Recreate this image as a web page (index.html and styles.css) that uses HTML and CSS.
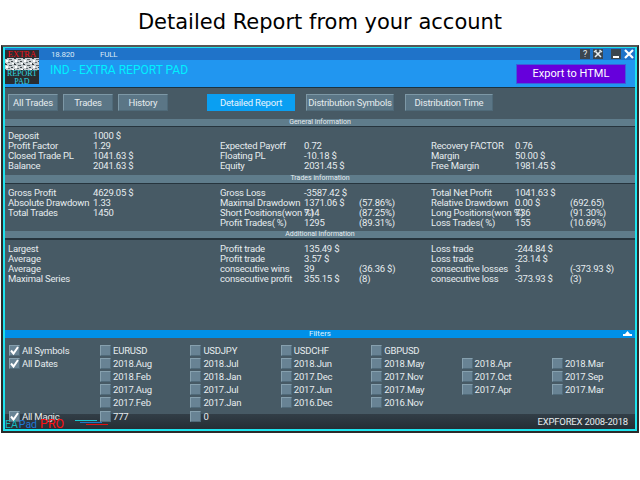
FILE: index.html
```html
<!DOCTYPE html>
<html>
<head>
  <meta charset="UTF-8">
  <title>Detailed Report</title>
  <link rel="stylesheet" href="styles.css">
</head>
<body>
  <h1>Detailed Report from your account</h1>
  <div class="window">
    <div class="frame">
      <div class="titlebar">
        <span class="version">18.820</span>
        <span class="mode">FULL</span>
        <div class="win-buttons">
          <span class="win-btn">?</span>
          <span class="win-btn tools">
            <svg width="10" height="10" viewBox="0 0 10 10"><path d="M2.5 2.5 8 8M7.5 2.5 2 8" stroke="#e8eef2" stroke-width="1.6"/><path d="M1 3 3.5 1M6.5 1 9 3" stroke="#e8eef2" stroke-width="1.4"/></svg>
          </span>
          <span class="win-btn min"><i></i></span>
          <span class="win-btn close">
            <svg width="10" height="10" viewBox="0 0 10 10"><path d="M1 1 9 9M9 1 1 9" stroke="#fff" stroke-width="2.2"/></svg>
          </span>
        </div>
      </div>
      <div class="header">
        <div class="logo">
          <span class="logo-red">EXTRA</span>
          <svg class="logo-noise" width="34" height="12" viewBox="0 0 34 12">
            <defs>
              <pattern id="noise" width="9" height="6" patternUnits="userSpaceOnUse">
                <rect width="9" height="6" fill="#c9cfd2"/>
                <rect x="0" y="0" width="2" height="1" fill="#33393d"/>
                <rect x="4" y="1" width="3" height="1" fill="#5c6468"/>
                <rect x="1" y="2" width="2" height="2" fill="#fff"/>
                <rect x="6" y="3" width="2" height="1" fill="#3c4347"/>
                <rect x="3" y="4" width="2" height="1" fill="#6a7276"/>
                <rect x="7" y="5" width="2" height="1" fill="#fff"/>
                <rect x="0" y="5" width="1" height="1" fill="#484f53"/>
              </pattern>
            </defs>
            <rect width="34" height="12" fill="url(#noise)"/>
          </svg>
          <span class="logo-cyan">REPORT</span>
          <span class="logo-cyan">PAD</span>
        </div>
        <div class="app-title">IND - EXTRA REPORT PAD</div>
        <button class="export">Export to HTML</button>
      </div>

      <div class="tabs">
        <span class="tab">All Trades</span>
        <span class="tab">Trades</span>
        <span class="tab">History</span>
        <span class="tab big active">Detailed Report</span>
        <span class="tab big">Distribution Symbols</span>
        <span class="tab big">Distribution Time</span>
      </div>

      <div class="section-bar">General information</div>
      <div class="info general">
        <span>Deposit</span><span>1000 $</span><span></span><span></span><span></span><span></span><span></span><span></span>
        <span>Profit Factor</span><span>1.29</span><span>Expected Payoff</span><span>0.72</span><span></span><span>Recovery FACTOR</span><span>0.76</span><span></span>
        <span>Closed Trade PL</span><span>1041.63 $</span><span>Floating PL</span><span>-10.18 $</span><span></span><span>Margin</span><span>50.00 $</span><span></span>
        <span>Balance</span><span>2041.63 $</span><span>Equity</span><span>2031.45 $</span><span></span><span>Free Margin</span><span>1981.45 $</span><span></span>
      </div>

      <div class="section-bar tall">Trades information</div>
      <div class="info trades">
        <span>Gross Profit</span><span>4629.05 $</span><span>Gross Loss</span><span>-3587.42 $</span><span></span><span>Total Net Profit</span><span>1041.63 $</span><span></span>
        <span>Absolute Drawdown</span><span>1.33</span><span>Maximal Drawdown</span><span>1371.06 $</span><span>(57.86%)</span><span>Relative Drawdown</span><span>0.00 $</span><span>(692.65)</span>
        <span>Total Trades</span><span>1450</span><span>Short Positions(won %)</span><span>714</span><span>(87.25%)</span><span>Long Positions(won %)</span><span>736</span><span>(91.30%)</span>
        <span></span><span></span><span>Profit Trades( %)</span><span>1295</span><span>(89.31%)</span><span>Loss Trades( %)</span><span>155</span><span>(10.69%)</span>
      </div>

      <div class="section-bar thick">Additional information</div>
      <div class="info additional">
        <span>Largest</span><span></span><span>Profit trade</span><span>135.49 $</span><span></span><span>Loss trade</span><span>-244.84 $</span><span></span>
        <span>Average</span><span></span><span>Profit trade</span><span>3.57 $</span><span></span><span>Loss trade</span><span>-23.14 $</span><span></span>
        <span>Average</span><span></span><span>consecutive wins</span><span>39</span><span>(36.36 $)</span><span>consecutive losses</span><span>3</span><span>(-373.93 $)</span>
        <span>Maximal Series</span><span></span><span>consecutive profit</span><span>355.15 $</span><span>(8)</span><span>consecutive loss</span><span>-373.93 $</span><span>(3)</span>
      </div>

      <div class="filter-bar">
        Filters
        <svg class="collapse" width="9" height="5" viewBox="0 0 9 5"><path d="M4.5 0 7 3H9V5H0V3H2Z" fill="#fff"/></svg>
      </div>
      <div class="filters">
        <label class="item"><span class="box on"><svg width="11" height="11" viewBox="0 0 11 11"><path d="M2 5.5 4.5 8.5 9 2" fill="none" stroke="#fff" stroke-width="2"/></svg></span>All Symbols</label>
        <label class="item"><span class="box"></span>EURUSD</label>
        <label class="item"><span class="box"></span>USDJPY</label>
        <label class="item"><span class="box"></span>USDCHF</label>
        <label class="item"><span class="box"></span>GBPUSD</label>

        <label class="item row-start"><span class="box on"><svg width="11" height="11" viewBox="0 0 11 11"><path d="M2 5.5 4.5 8.5 9 2" fill="none" stroke="#fff" stroke-width="2"/></svg></span>All Dates</label>
        <label class="item"><span class="box"></span>2018.Aug</label>
        <label class="item"><span class="box"></span>2018.Jul</label>
        <label class="item"><span class="box"></span>2018.Jun</label>
        <label class="item"><span class="box"></span>2018.May</label>
        <label class="item"><span class="box"></span>2018.Apr</label>
        <label class="item"><span class="box"></span>2018.Mar</label>

        <label class="item col-two"><span class="box"></span>2018.Feb</label>
        <label class="item"><span class="box"></span>2018.Jan</label>
        <label class="item"><span class="box"></span>2017.Dec</label>
        <label class="item"><span class="box"></span>2017.Nov</label>
        <label class="item"><span class="box"></span>2017.Oct</label>
        <label class="item"><span class="box"></span>2017.Sep</label>

        <label class="item col-two"><span class="box"></span>2017.Aug</label>
        <label class="item"><span class="box"></span>2017.Jul</label>
        <label class="item"><span class="box"></span>2017.Jun</label>
        <label class="item"><span class="box"></span>2017.May</label>
        <label class="item"><span class="box"></span>2017.Apr</label>
        <label class="item"><span class="box"></span>2017.Mar</label>

        <label class="item col-two"><span class="box"></span>2017.Feb</label>
        <label class="item"><span class="box"></span>2017.Jan</label>
        <label class="item"><span class="box"></span>2016.Dec</label>
        <label class="item"><span class="box"></span>2016.Nov</label>

        <label class="item row-start"><span class="box on"><svg width="11" height="11" viewBox="0 0 11 11"><path d="M2 5.5 4.5 8.5 9 2" fill="none" stroke="#fff" stroke-width="2"/></svg></span>All Magic</label>
        <label class="item"><span class="box"></span>777</label>
        <label class="item"><span class="box"></span>0</label>
      </div>

      <div class="footer">
        <div class="brand">
          <span class="brand-ea">EA</span><span class="brand-pad">Pad</span><span class="brand-pro">PRO</span>
        </div>
        <svg class="brand-lines" width="33" height="6" viewBox="0 0 33 6">
          <rect x="0" y="0" width="22" height="1" fill="#19c8cf"/>
          <rect x="5" y="2" width="22" height="1" fill="#1f78c8"/>
          <rect x="11" y="4" width="22" height="1" fill="#e01010"/>
        </svg>
        <span class="copyright">EXPFOREX 2008-2018</span>
      </div>
    </div>
  </div>
</body>
</html>
```

FILE: styles.css
```css
body {
  margin: 0;
  background: #fff;
  font-family: Roboto, "Liberation Sans", sans-serif;
  overflow: hidden;
}

h1 {
  margin: 0;
  height: 45px;
  line-height: 45px;
  text-align: center;
  font-family: "DejaVu Sans", sans-serif;
  font-size: 21px;
  font-weight: normal;
  color: #000;
}

.window {
  box-sizing: border-box;
  width: 638px;
  height: 388px;
  margin-left: 1px;
  border: 2px solid #2a2a2a;
  border-top-color: #555;
}

.frame {
  box-sizing: border-box;
  height: 100%;
  display: flex;
  flex-direction: column;
  background: #475a65;
  border: 2px solid #1fe3ee;
  border-top-width: 1px;
  color: #e6ecef;
  font-size: 9.5px;
  letter-spacing: -0.2px;
}

.titlebar {
  flex: none;
  height: 12px;
  display: flex;
  align-items: center;
  background: #1f73c9;
  color: #dbe9f5;
  font-size: 8px;
}

.version {
  margin-left: 46px;
  width: 49px;
}

.win-buttons {
  margin-left: auto;
  margin-right: 1px;
  display: flex;
  gap: 3px;
}

.win-btn {
  width: 10px;
  height: 10px;
  display: block;
  background: #3b4650;
  color: #e8eef2;
  font-size: 9px;
  line-height: 10px;
  text-align: center;
}

.win-btn.tools {
  margin-right: 5px;
}

.win-btn.min i {
  display: block;
  width: 6px;
  height: 2px;
  margin: 7px 2px 0;
  background: #fff;
}

.win-btn.close {
  background: none;
}

.header {
  flex: none;
  height: 27px;
  display: flex;
  align-items: center;
  background: #2196f0;
  border-bottom: 1px solid #1c3340;
  position: relative;
}

/* logo sits across the title bar and the blue header */
.logo {
  position: absolute;
  left: 0;
  top: -10px;
  width: 34px;
  height: 34px;
  display: flex;
  flex-direction: column;
  align-items: center;
  background: #2a2d30;
  font-family: "Liberation Serif", serif;
  font-size: 8px;
  line-height: 7.5px;
  letter-spacing: 0;
}

.logo-red {
  color: #f01018;
  font-size: 8.5px;
  line-height: 8px;
  height: 8px;
}

.logo-noise {
  display: block;
  flex: none;
}

.logo-cyan {
  color: #2fd8e0;
}

.app-title {
  margin-left: 45px;
  margin-top: -7px;
  color: #00f0ff;
  font-size: 12px;
  letter-spacing: 0;
}

.export {
  margin-left: auto;
  margin-right: 9px;
  width: 110px;
  height: 20px;
  padding: 0;
  background: #6600dc;
  border: 1px solid #3d5fd8;
  color: #fff;
  font-family: inherit;
  font-size: 11px;
}

.tabs {
  flex: none;
  height: 31px;
  padding-top: 6px;
  box-sizing: border-box;
  padding-left: 3px;
  display: flex;
  align-items: flex-start;
  gap: 5px;
}

.tab {
  box-sizing: border-box;
  width: 50px;
  height: 17px;
  line-height: 15px;
  text-align: center;
  background: #5b7686;
  border: 1px solid #4f6a79;
  border-left-color: #7d98a6;
  border-top-color: #7d98a6;
}

.tab.big {
  width: 88px;
  margin-left: 6px;
}

.tab.big.active {
  margin-left: 34px;
  background: #0a9ff2;
  border-color: #0a9ff2;
  color: #e8f6ff;
}

.section-bar {
  flex: none;
  height: 7px;
  line-height: 7px;
  background: #5f7c8b;
  border-bottom: 1px solid #26343d;
  text-align: center;
  font-size: 7px;
  letter-spacing: 0;
  color: #e6ecef;
}

.section-bar.tall {
  height: 8px;
}

.section-bar.thick {
  border-bottom-width: 2px;
}

.info {
  flex: none;
  display: grid;
  grid-template-columns: 85px 127px 84px 55px 72px 84px 55px 1fr;
  grid-auto-rows: 10px;
  line-height: 10px;
  padding-left: 3px;
  padding-top: 4px;
  white-space: nowrap;
}

.general {
  padding-bottom: 4px;
}

.trades {
  padding-bottom: 3px;
}

.info.additional {
  flex: 1;
}

.filter-bar {
  flex: none;
  height: 8px;
  line-height: 8px;
  background: #0090e8;
  text-align: center;
  color: #dff2ff;
  font-size: 8px;
  letter-spacing: 0;
  position: relative;
}

.collapse {
  position: absolute;
  right: 3px;
  top: 1px;
}

.filters {
  flex: none;
  height: 76px;
  box-sizing: border-box;
  padding-top: 5.5px;
  padding-left: 4px;
  display: grid;
  grid-template-columns: 91px repeat(6, 90.4px);
  grid-auto-rows: 13.2px;
  position: relative;
  z-index: 1;
}

.item {
  display: flex;
  align-items: center;
  gap: 2px;
  white-space: nowrap;
}

.row-start {
  grid-column: 1;
}

.col-two {
  grid-column: 2;
}

.box {
  flex: none;
  box-sizing: border-box;
  width: 11px;
  height: 11px;
  background: #688394;
  border: 1px solid #506a79;
  border-left-color: #86a0ae;
  border-top-color: #86a0ae;
}

.box.on svg {
  display: block;
  margin: -1px;
}

.footer {
  flex: none;
  height: 15px;
  display: flex;
  align-items: center;
  background: linear-gradient(#323e47, #252e35);
  position: relative;
}

.brand {
  position: relative;
  z-index: 2;
  margin-top: 4px;
  width: 70px;
  font-size: 10.5px;
  letter-spacing: 0;
  white-space: nowrap;
}

.brand-ea {
  color: #16b8bf;
}

.brand-pad {
  margin-left: 1px;
  color: #1f78d8;
}

.brand-pro {
  margin-left: 3px;
  color: #ff1010;
  font-size: 12.5px;
}

.brand-lines {
  margin-top: 2px;
}

.copyright {
  margin-left: auto;
  margin-right: 7px;
}
```
